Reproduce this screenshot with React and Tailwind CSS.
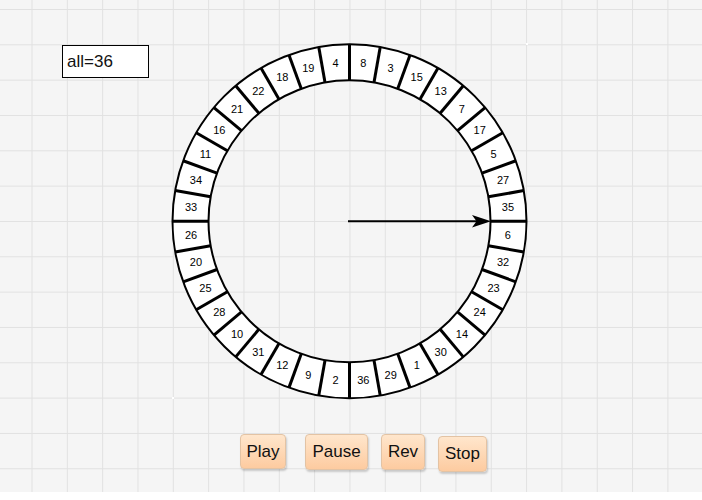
import React from 'react';

const numbers = [
  8, 3, 15, 13, 7, 17, 5, 27, 35,
  6, 32, 23, 24, 14, 30, 1, 29, 36,
  2, 9, 12, 31, 10, 28, 25, 20, 26,
  33, 34, 11, 16, 21, 22, 18, 19, 4,
];

const CX = 179.5;
const CY = 179.3;
const R_OUT = 177;
const R_IN = 141;
const R_MID = 159;

const pt = (r, deg) => {
  const a = (deg * Math.PI) / 180;
  return [CX + r * Math.sin(a), CY - r * Math.cos(a)];
};

const Wheel = () => {
  const ring =
    `M ${CX - R_OUT} ${CY} a ${R_OUT} ${R_OUT} 0 1 0 ${R_OUT * 2} 0 a ${R_OUT} ${R_OUT} 0 1 0 ${-R_OUT * 2} 0 Z ` +
    `M ${CX - R_IN} ${CY} a ${R_IN} ${R_IN} 0 1 0 ${R_IN * 2} 0 a ${R_IN} ${R_IN} 0 1 0 ${-R_IN * 2} 0 Z`;

  return (
    <svg width="360" height="360" viewBox="0 0 360 360" className="ml-[21px] mt-[42px] shrink-0 overflow-visible">
      <path d={ring} fill="#ffffff" fillRule="evenodd" />
      <circle cx={CX} cy={CY} r={R_OUT} fill="none" stroke="#000" strokeWidth="2" />
      <circle cx={CX} cy={CY} r={R_IN} fill="none" stroke="#000" strokeWidth="2" />
      {numbers.map((_, i) => {
        const [x1, y1] = pt(R_IN, i * 10);
        const [x2, y2] = pt(R_OUT, i * 10);
        return <line key={'l' + i} x1={x1} y1={y1} x2={x2} y2={y2} stroke="#000" strokeWidth="3" />;
      })}
      {numbers.map((n, i) => {
        const [x, y] = pt(R_MID, i * 10 + 5);
        return (
          <text
            key={'t' + i}
            x={x}
            y={y}
            textAnchor="middle"
            dominantBaseline="central"
            fontFamily="'Liberation Sans', Arial, sans-serif"
            fontSize="11"
            fill="#000"
          >
            {n}
          </text>
        );
      })}
      {/* pointer */}
      <line x1="178" y1={CY} x2="307" y2={CY} stroke="#000" strokeWidth="2" />
      <path d={`M 321 ${CY} L 302 ${CY - 6.3} L 306.5 ${CY} L 302 ${CY + 6.3} Z`} fill="#000" />
    </svg>
  );
};

const Btn = ({ children, className }) => (
  <button
    className={
      'flex items-center justify-center rounded-[4px] border border-[#e3c3a4] bg-[linear-gradient(to_bottom,#ffe6cc,#fdcba0)] text-[17px] text-[#111] shadow-[1px_2px_2px_rgba(0,0,0,0.18)] ' +
      className
    }
  >
    {children}
  </button>
);

export default function App() {
  return (
    <div className="w-[702px] h-[500px] bg-white font-['Liberation_Sans',Arial,sans-serif]">
      <div className="relative h-[492px] w-full bg-[#f5f5f5] bg-[linear-gradient(to_right,#e1e1e1_1px,transparent_1px),linear-gradient(to_bottom,#e1e1e1_1px,transparent_1px)] bg-[size:35.33px_35.33px] bg-[position:31.5px_9px]">
        <div className="flex items-start">
          <div className="ml-[62px] mt-[45px] flex h-[33px] w-[87px] shrink-0 items-center border border-black bg-white pl-[4px] text-[17px] text-[#111]">
            all=36
          </div>
          <Wheel />
        </div>

        <div className="mt-[32px] flex items-start pl-[240px]">
          <Btn className="h-[35px] w-[46px]">Play</Btn>
          <Btn className="ml-[19px] h-[36px] w-[63px]">Pause</Btn>
          <Btn className="ml-[13px] h-[36px] w-[44px]">Rev</Btn>
          <Btn className="ml-[13px] mt-[2px] h-[36px] w-[49px]">Stop</Btn>
        </div>

        {/* selection corner dots */}
        <span className="absolute left-[526px] top-[43px] h-[2px] w-[2px] bg-white" />
        <span className="absolute left-[172px] top-[397px] h-[2px] w-[2px] bg-white" />
      </div>
    </div>
  );
}
